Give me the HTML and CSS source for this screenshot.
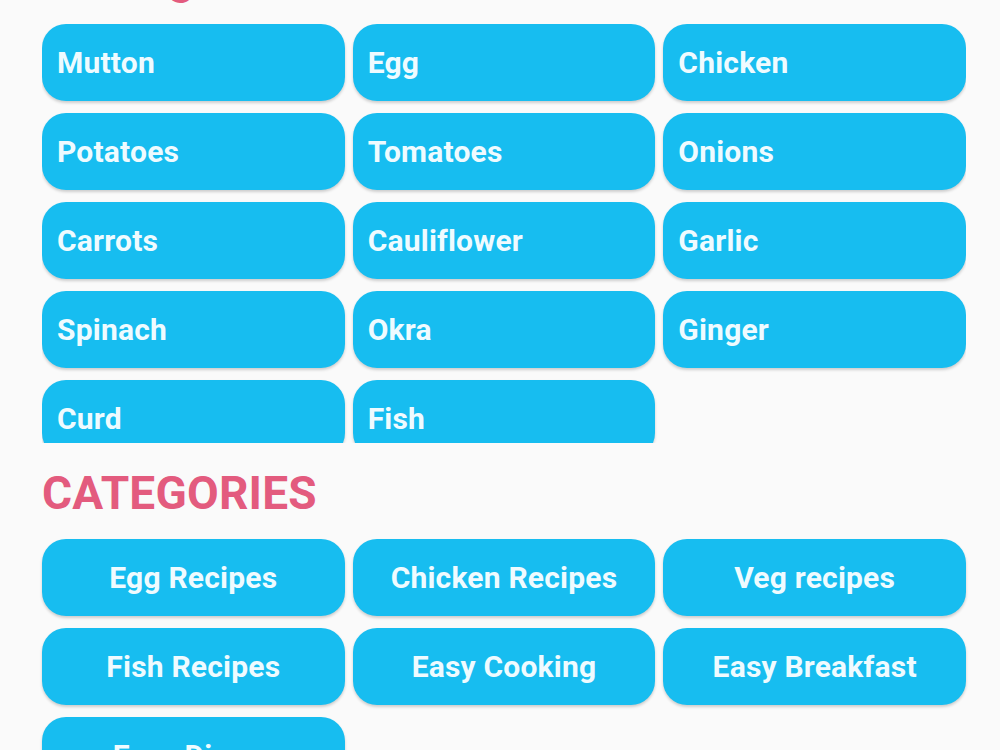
FILE: index.html
```html
<!DOCTYPE html>
<html lang="en">
<head>
<meta charset="utf-8">
<title>Recipes</title>
<link rel="stylesheet" href="styles.css">
</head>
<body>
<main class="page">
  <section class="section">
    <h2 class="section-title">Our Ingredients</h2>
    <div class="tile-scroll">
      <div class="tile-grid">
        <button class="tile">Mutton</button>
        <button class="tile">Egg</button>
        <button class="tile">Chicken</button>
        <button class="tile">Potatoes</button>
        <button class="tile">Tomatoes</button>
        <button class="tile">Onions</button>
        <button class="tile">Carrots</button>
        <button class="tile">Cauliflower</button>
        <button class="tile">Garlic</button>
        <button class="tile">Spinach</button>
        <button class="tile">Okra</button>
        <button class="tile">Ginger</button>
        <button class="tile">Curd</button>
        <button class="tile">Fish</button>
      </div>
    </div>
  </section>

  <section class="section">
    <h2 class="section-title">CATEGORIES</h2>
    <div class="tile-grid">
      <button class="tile tile-center">Egg Recipes</button>
      <button class="tile tile-center">Chicken Recipes</button>
      <button class="tile tile-center">Veg recipes</button>
      <button class="tile tile-center">Fish Recipes</button>
      <button class="tile tile-center">Easy Cooking</button>
      <button class="tile tile-center">Easy Breakfast</button>
      <button class="tile tile-center">Easy Dinner</button>
    </div>
  </section>
</main>
</body>
</html>
```

FILE: styles.css
```css
html, body {
  margin: 0;
  padding: 0;
  background: #fafafa;
  font-family: "Roboto", "Liberation Sans", sans-serif;
}

/* content is shown scrolled down a little, heading of the first section above the fold */
.page {
  margin-top: -49px;
  padding: 0 34px 40px 42px;
  display: flex;
  flex-direction: column;
  gap: 23px;
}

.section {
  display: flex;
  flex-direction: column;
  gap: 19px;
}

.section-title {
  margin: 0;
  font-size: 46px;
  line-height: 54px;
  font-weight: 700;
  color: #e35b7e;
  letter-spacing: 0.2px;
}

.tile-scroll {
  height: 419px;
  overflow: hidden;
}

.tile-grid {
  display: grid;
  grid-template-columns: repeat(3, 1fr);
  grid-auto-rows: 77px;
  gap: 12px 8px;
  padding-bottom: 4px;
}

.tile {
  border: 0;
  margin: 0;
  display: flex;
  align-items: center;
  padding: 0 15px;
  background: #17bdf0;
  color: #effbff;
  border-radius: 24px;
  box-shadow: 0 2px 3px rgba(0, 0, 0, 0.18);
  font-family: "Roboto", "Liberation Sans", sans-serif;
  font-size: 30px;
  font-weight: 700;
  letter-spacing: 0.2px;
  text-align: left;
  cursor: pointer;
}

.tile-center {
  justify-content: center;
  text-align: center;
}
```
